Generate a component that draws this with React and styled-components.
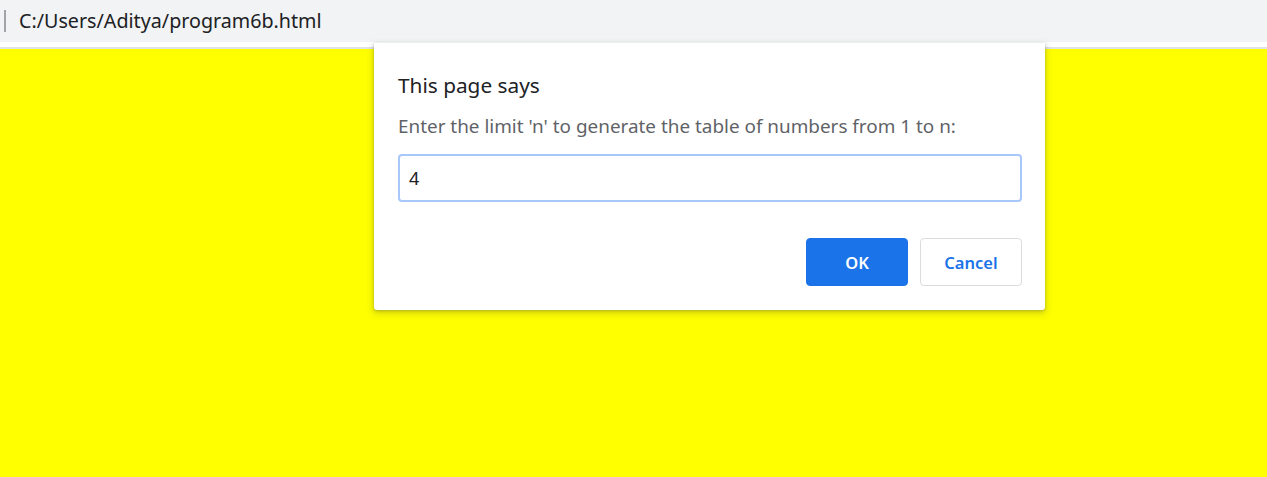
import styled, { createGlobalStyle } from 'styled-components'
import { useState } from 'react'

const GlobalStyle = createGlobalStyle`
  html, body {
    margin: 0;
    padding: 0;
    height: 100%;
    overflow: hidden;
  }
  #root {
    height: 100%;
  }
`;

function PromptDialog(props){
    let [value, setValue] = useState(props.defaultValue);

    return(
        <Dialog>
            <Title>{props.title}</Title>
            <Message>{props.message}</Message>
            <Field autoFocus value={value} onChange={(e)=>setValue(e.target.value)} />
            <Actions>
                <Button primary>OK</Button>
                <Button>Cancel</Button>
            </Actions>
        </Dialog>
    )
}

export default function App(){
    return(
        <>
            <GlobalStyle />
            <Page>
                <AddressBar>
                    <Divider />
                    <Url>C:/Users/Aditya/program6b.html</Url>
                </AddressBar>
                <Gap />
                <Content />
                <PromptDialog
                    title="This page says"
                    message="Enter the limit 'n' to generate the table of numbers from 1 to n:"
                    defaultValue="4"
                />
            </Page>
        </>
    )
}

const Page = styled.div`
  position: relative;
  display: flex;
  flex-direction: column;
  height: 100%;
  font-family: "Noto Sans", "Open Sans", sans-serif;
`;

const AddressBar = styled.div`
  display: flex;
  align-items: center;
  gap: 13px;
  height: 42px;
  padding-left: 4px;
  background-color: #f1f3f4;
`;

const Divider = styled.span`
  width: 2px;
  height: 22px;
  background-color: #a0a4a8;
`;

const Url = styled.span`
  font-size: 19.7px;
  color: #202124;
  padding-bottom: 2px;
`;

const Gap = styled.div`
  height: 5px;
  background-color: #fff;
  border-bottom: 2px solid #dfe1e5;
`;

const Content = styled.div`
  flex: 1;
  background-color: #ffff00;
`;

const Dialog = styled.div`
  position: absolute;
  top: 43px;
  left: 374px;
  width: 671px;
  height: 267px;
  box-sizing: border-box;
  padding: 24px 23px 0 24px;
  background-color: #fff;
  border-radius: 0 0 3px 3px;
  box-shadow: 0 1px 3px rgba(60, 64, 67, 0.3), 0 3px 6px 2px rgba(60, 64, 67, 0.15);
  display: flex;
  flex-direction: column;
`;

const Title = styled.div`
  font-size: 20.8px;
  color: #202124;
  line-height: 36px;
`;

const Message = styled.div`
  font-size: 18.9px;
  color: #5f6368;
  margin-top: 9px;
  line-height: 28px;
`;

const Field = styled.input`
  margin-top: 14px;
  height: 48px;
  flex-shrink: 0;
  box-sizing: border-box;
  width: 100%;
  border: 2px solid #a8c7fa;
  border-radius: 4px;
  padding: 0 9px;
  font-family: inherit;
  font-size: 18px;
  color: #202124;
  caret-color: #202124;
  outline: none;
`;

const Actions = styled.div`
  display: flex;
  justify-content: flex-end;
  gap: 12px;
  margin-top: 36px;
`;

const Button = styled.button`
  width: 102px;
  height: 48px;
  flex-shrink: 0;
  box-sizing: border-box;
  border-radius: 4px;
  font-family: inherit;
  font-size: 16.5px;
  font-weight: 600;
  cursor: pointer;
  border: 1px solid ${(props) => (props.primary ? '#1a73e8' : '#dadce0')};
  background-color: ${(props) => (props.primary ? '#1a73e8' : '#fff')};
  color: ${(props) => (props.primary ? '#fff' : '#1a73e8')};
`;
